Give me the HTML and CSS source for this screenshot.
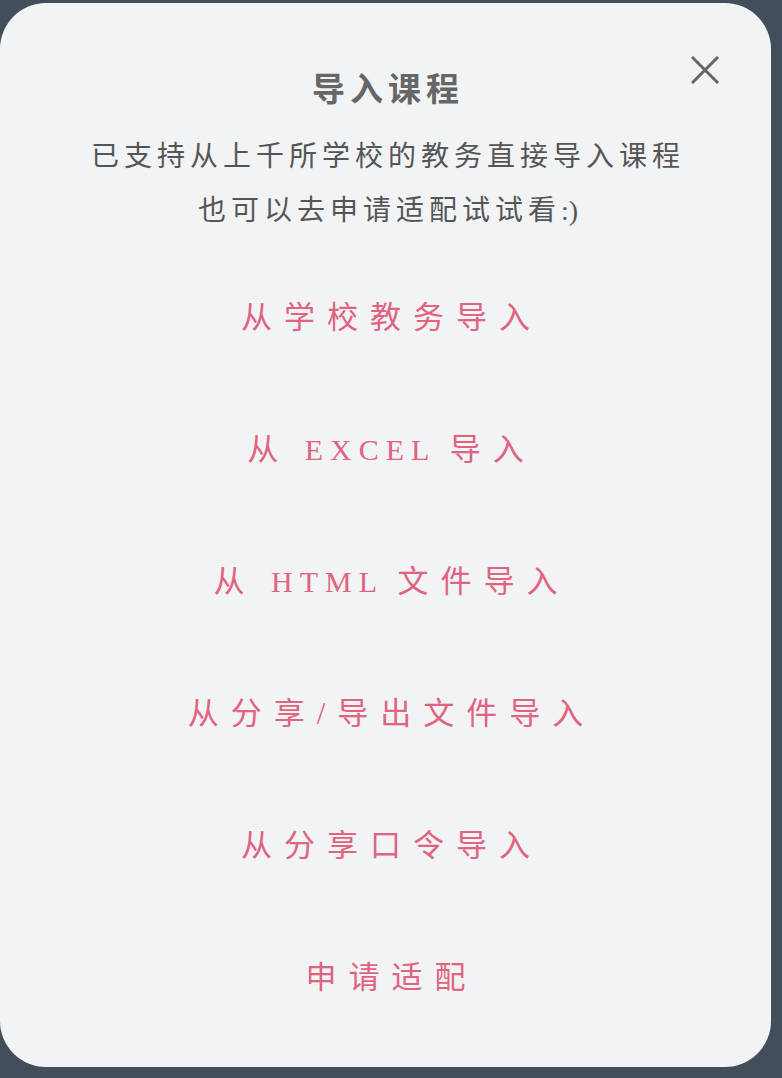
FILE: index.html
```html
<!DOCTYPE html>
<html lang="zh-CN">
<head>
<meta charset="utf-8">
<title>导入课程</title>
<link rel="stylesheet" href="styles.css">
</head>
<body>
<div class="card">
  <button class="close" aria-label="关闭">
    <svg width="28" height="28" viewBox="0 0 28 28"><path d="M2 2 L26 26 M26 2 L2 26" stroke="#666" stroke-width="3" stroke-linecap="square" fill="none"/></svg>
  </button>
  <h1 class="title">导入课程</h1>
  <p class="subtitle">已支持从上千所学校的教务直接导入课程<br>也可以去申请适配试试看<span class="smile">:)</span></p>
  <ul class="options">
    <li class="option">从学校教务导入</li>
    <li class="option">从<span class="latin"> EXCEL </span>导入</li>
    <li class="option">从<span class="latin"> HTML </span>文件导入</li>
    <li class="option">从分享/导出文件导入</li>
    <li class="option">从分享口令导入</li>
    <li class="option">申请适配</li>
  </ul>
</div>
</body>
</html>
```
FILE: styles.css
```css
html, body {
  margin: 0;
  padding: 0;
  background: #424e5b;
}
body {
  font-family: "Liberation Serif", "Noto Sans CJK SC", serif;
}
.card {
  position: relative;
  box-sizing: border-box;
  margin: 3px 11px 0 0;
  height: 1064px;
  background: #f2f3f5;
  border-radius: 46px;
  padding-top: 65px;
  text-align: center;
}
.close {
  position: absolute;
  top: 53px;
  right: 52px;
  width: 28px;
  height: 28px;
  padding: 0;
  border: 0;
  background: transparent;
}
.close svg { display: block; }
.title {
  margin: 0;
  font-size: 33px;
  line-height: 44px;
  font-weight: 700;
  color: #666666;
  letter-spacing: 5px;
  padding-left: 5px;
}
.subtitle {
  margin: 18px 0 0;
  font-size: 28px;
  line-height: 54px;
  color: #555555;
  letter-spacing: 5px;
  padding-left: 5px;
  font-weight: 400;
}
.smile {
  letter-spacing: 0;
}
.options {
  list-style: none;
  margin: 14px 0 0;
  padding: 0;
}
.option {
  height: 132px;
  line-height: 132px;
  font-size: 31px;
  color: #e0637f;
  letter-spacing: 12px;
  padding-left: 12px;
}
.latin {
  font-size: 30px;
  letter-spacing: 7px;
}
```
